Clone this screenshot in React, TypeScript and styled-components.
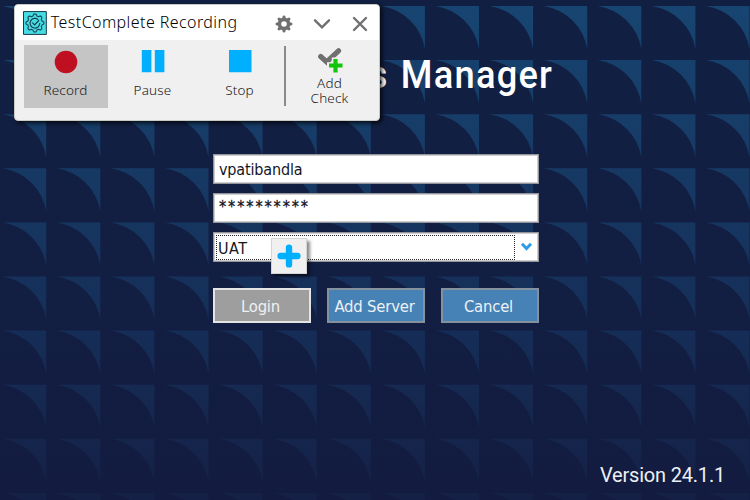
import React from "react";
import styled, { createGlobalStyle } from "styled-components";

const GlobalStyle = createGlobalStyle`
  * { box-sizing: border-box; }
  body { margin: 0; overflow: hidden; }
`;

const Screen = styled.main`
  position: relative;
  width: 750px;
  height: 500px;
  overflow: hidden;
  display: flex;
  flex-direction: column;
  background: linear-gradient(#112042, #121e42 60%, #131b40);
`;

const Backdrop = styled.svg`
  position: absolute;
  inset: 0;
`;

const Heading = styled.h1`
  position: relative;
  margin: 50px 197px 0 0;
  height: 50px;
  align-self: flex-end;
  color: #fff;
  font: 500 39px/50px Roboto, sans-serif;
  letter-spacing: 1.3px;
  word-spacing: 2px;
  white-space: pre;
  transform: scaleX(0.93);
  transform-origin: right;
`;

const LoginForm = styled.form`
  position: relative;
  width: 326px;
  margin: 54px 0 0 213px;
  display: flex;
  flex-direction: column;
  gap: 9px;
  font: 16px/30px "DejaVu Sans Condensed", "DejaVu Sans", sans-serif;
  color: #15151f;
`;

const Field = styled.div`
  height: 30px;
  padding: 0 5px;
  border: 1px solid #94949b;
  box-shadow: inset 0 0 0 1px #cfcfd2;
  background: #fff;
  letter-spacing: -0.15px;
`;

const PasswordField = styled(Field)`
  line-height: 25px;
  letter-spacing: 1.9px;
  -webkit-text-stroke: 0.3px #15151f;
`;

const SelectField = styled(Field)`
  display: flex;
  align-items: center;
  justify-content: space-between;
  padding: 0 5px 0 2px;
`;

const SelectValue = styled.span`
  width: 299px;
  height: 25px;
  border: 1px dotted #222;
  padding-left: 1px;
  line-height: 25px;
  letter-spacing: 0.5px;
`;

const ButtonRow = styled.div`
  display: grid;
  grid-template-columns: repeat(3, 98px);
  justify-content: space-between;
  margin-top: 17px;
`;

const FormButton = styled.button<{ $selected?: boolean }>`
  height: 35px;
  padding: 2px 3px 0 0;
  border: ${(p) => (p.$selected ? "2px solid #e4e4e4" : "2px solid #8492a0")};
  background: ${(p) => (p.$selected ? "#9e9e9e" : "#4682b6")};
  color: #edf1f5;
  font: 16.5px/29px "DejaVu Sans Condensed", "DejaVu Sans", sans-serif;
  letter-spacing: -0.2px;
  white-space: nowrap;
`;

const Version = styled.footer`
  position: relative;
  margin: auto 25px 12px auto;
  color: #edf0f5;
  font: 20px/26px Roboto, sans-serif;
  letter-spacing: -0.2px;
`;

const Recorder = styled.section`
  position: absolute;
  left: 14px;
  top: 4px;
  width: 366px;
  height: 117px;
  overflow: hidden;
  display: flex;
  flex-direction: column;
  border: 1px solid #c9c9c5;
  border-radius: 4px;
  background: #f0f0f0;
  box-shadow: 2px 2px 4px rgba(0, 0, 0, 0.8);
  font-family: "Noto Sans", sans-serif;
`;

const TitleBar = styled.header`
  height: 35px;
  flex: none;
  display: flex;
  align-items: center;
  padding: 0 9px 0 8px;
  background: #fff;
`;

const Title = styled.span`
  margin: -2px 0 0 4px;
  width: 225px;
  color: #000;
  font: 300 16px/34px "Noto Sans", sans-serif;
  letter-spacing: 0.42px;
  white-space: nowrap;
`;

const WindowControls = styled.div`
  display: grid;
  grid-template-columns: 20px 20px 20px;
  gap: 18px;
  margin-top: 3px;
`;

const Tools = styled.div`
  display: grid;
  grid-template-columns: 84px 84px 84px 1px 84px;
  column-gap: 3px;
  padding: 5px 0 0 9px;
`;

const Tool = styled.div<{ $active?: boolean; $compact?: boolean }>`
  height: 63px;
  display: flex;
  flex-direction: column;
  align-items: center;
  padding: ${(p) => (p.$compact ? "3px 3px 0 0" : "5px 0 0")};
  background: ${(p) => (p.$active ? "#c5c5c5" : "transparent")};
`;

const ToolLabel = styled.span<{ $twoLines?: boolean }>`
  margin: ${(p) => (p.$twoLines ? "3px 0 0" : "9px 1px 0 0")};
  color: #202020;
  text-align: center;
  font: 300 13.5px/15px "Noto Sans", sans-serif;
  letter-spacing: 0.15px;
`;

const Divider = styled.div`
  width: 2px;
  height: 60px;
  margin: 1px 0 0 -1px;
  background: #8a8a8a;
`;

const AddBadge = styled.div`
  position: absolute;
  left: 271px;
  top: 238px;
  width: 36px;
  height: 36px;
  display: grid;
  place-items: center;
  border: 1px solid #d4d4d4;
  background: #f0f0f0;
  box-shadow: 3px 3px 3px rgba(0, 0, 0, 0.45);
`;

const PITCH = 54.1;

function TiledBackdrop() {
  const tiles: string[] = [];
  for (let row = 0; row < 10; row++) {
    for (let col = 0; col < 14; col++) {
      const x = 3 + col * PITCH;
      const y = 6 + row * PITCH;
      tiles.push(`M${x} ${y}H${x + 43.2}V${y + 43}A52 52 0 0 0 ${x} ${y}Z`);
    }
  }
  return (
    <Backdrop width="750" height="500" aria-hidden="true">
      <defs>
        <linearGradient id="tileFade" gradientUnits="userSpaceOnUse" x1="0" y1="0" x2="0" y2="500">
          <stop offset="0" stopColor="#174571" />
          <stop offset="0.35" stopColor="#163964" />
          <stop offset="0.68" stopColor="#152d56" />
          <stop offset="1" stopColor="#152046" />
        </linearGradient>
      </defs>
      <path d={tiles.join("")} fill="url(#tileFade)" />
    </Backdrop>
  );
}

function ringPath(points: number, cx: number, cy: number, outer: number, inner: number) {
  const total = points * 24;
  const mid = (outer + inner) / 2;
  const amp = (outer - inner) / 2;
  const coords: string[] = [];
  for (let i = 0; i < total; i++) {
    const angle = (i / total) * Math.PI * 2;
    const wave = Math.max(-1, Math.min(1, Math.cos(angle * points) * 1.5));
    const r = mid + amp * wave;
    coords.push(`${(cx + Math.sin(angle) * r).toFixed(2)} ${(cy - Math.cos(angle) * r).toFixed(2)}`);
  }
  return `M${coords.join("L")}Z`;
}

const AppLogo = () => (
  <svg width="24" height="24" viewBox="0 0 24 24" fill="none">
    <path d="M.5 .5h23v23H.5z" fill="#45dce4" stroke="#17384a" />
    <path d={ringPath(8, 12, 12, 9, 7.3)} stroke="#173f50" strokeWidth="1.1" />
    <path d="M15.3 8.6A4.9 4.9 0 1 0 16.9 12M9.4 11.7l2.3 2.3 4.5-4.8" stroke="#173f50" strokeWidth="1.2" />
  </svg>
);

const GearIcon = () => (
  <svg width="20" height="20" viewBox="0 0 20 20">
    <path d={`${ringPath(8, 10, 10, 8.4, 6.3)}M12.8 10a2.8 2.8 0 1 0-5.6 0a2.8 2.8 0 1 0 5.6 0Z`} fill="#707070" fillRule="evenodd" />
  </svg>
);

const ChevronIcon = () => (
  <svg width="20" height="20" viewBox="0 0 20 20" fill="none" stroke="#707070" strokeWidth="2.4" strokeLinecap="round">
    <path d="m3 6.3 7 7 7-7" />
  </svg>
);

const CloseIcon = () => (
  <svg width="20" height="20" viewBox="0 0 20 20" fill="none" stroke="#707070" strokeWidth="2.4" strokeLinecap="round">
    <path d="m4 4 12 12M16 4 4 16" />
  </svg>
);

const RecordIcon = () => (
  <svg width="24" height="24" viewBox="0 0 24 24"><circle cx="12" cy="12" r="11.3" fill="#bf1021" /></svg>
);

const PauseIcon = () => (
  <svg width="24" height="24" viewBox="0 0 24 24" fill="#00b0ff"><path d="M.8 0h9.6v22.3H.8zM13.8 0h9.6v22.3h-9.6z" /></svg>
);

const StopIcon = () => (
  <svg width="24" height="24" viewBox="0 0 24 24" fill="#00b0ff"><path d="M1 0h22.5v22.3H1z" /></svg>
);

const AddCheckIcon = () => (
  <svg width="26" height="25" viewBox="0 0 26 25">
    <path d="m3.7 8.5 6 5.5L21.5 2.8" fill="none" stroke="#707070" strokeWidth="5.2" strokeLinecap="round" />
    <path d="M18 9.5v15M10 17.5h15" stroke="#f0f0f0" strokeWidth="6.5" />
    <path d="M18.5 11v13.5M12 17.5h13.5" stroke="#12c40b" strokeWidth="4.2" />
  </svg>
);

export default function App() {
  return (
    <Screen>
      <GlobalStyle />
      <TiledBackdrop />
      <Heading>s Manager</Heading>
      <LoginForm>
        <Field>vpatibandla</Field>
        <PasswordField>**********</PasswordField>
        <SelectField>
          <SelectValue>UAT</SelectValue>
          <svg width="13" height="10" viewBox="0 0 13 10" fill="none">
            <path d="m2 1.8 4.5 4.7L11 1.8" stroke="#2c9de8" strokeWidth="3" />
          </svg>
        </SelectField>
        <ButtonRow>
          <FormButton type="button" $selected>Login</FormButton>
          <FormButton type="button">Add Server</FormButton>
          <FormButton type="button">Cancel</FormButton>
        </ButtonRow>
      </LoginForm>
      <Version>Version 24.1.1</Version>
      <AddBadge>
        <svg width="24" height="24" viewBox="0 0 24 24">
          <path d="M12 3.6v16.8M3.6 12h16.8" stroke="#00b0ff" strokeWidth="6.4" strokeLinecap="round" />
        </svg>
      </AddBadge>
      <Recorder>
        <TitleBar>
          <AppLogo />
          <Title>TestComplete Recording</Title>
          <WindowControls><GearIcon /><ChevronIcon /><CloseIcon /></WindowControls>
        </TitleBar>
        <Tools>
          <Tool $active><RecordIcon /><ToolLabel>Record</ToolLabel></Tool>
          <Tool><PauseIcon /><ToolLabel>Pause</ToolLabel></Tool>
          <Tool><StopIcon /><ToolLabel>Stop</ToolLabel></Tool>
          <Divider />
          <Tool $compact><AddCheckIcon /><ToolLabel $twoLines>Add<br />Check</ToolLabel></Tool>
        </Tools>
      </Recorder>
    </Screen>
  );
}
